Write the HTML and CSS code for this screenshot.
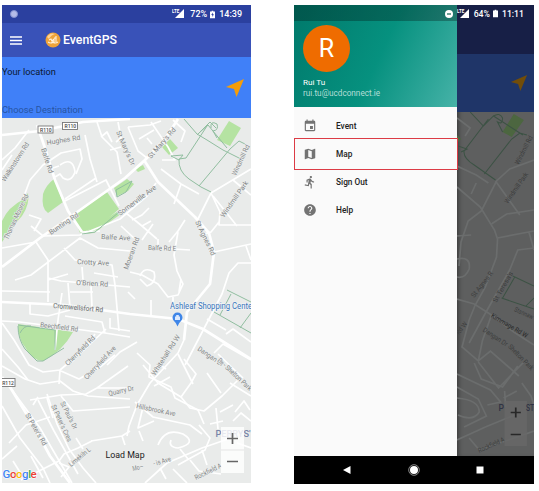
FILE: index.html
```html
<!DOCTYPE html>
<html lang="en">
<head>
<meta charset="utf-8">
<title>EventGPS</title>
<link rel="stylesheet" href="styles.css">
</head>
<body>
<main class="stage">
  <section class="phone phone-map">
    <header class="status">
      <span class="sync"></span>
      <svg class="signal" viewBox="0 0 13 10"><path d="M12 0V9H3Z"/><text x="0" y="4">LTE</text></svg>
      <span>72%</span>
      <svg class="battery" viewBox="0 0 6 9"><path d="M2 0h2v1h2v8H0V1h2Z"/><path class="bolt" d="M3.4 2 1.5 5h1.3v2.5L4.7 4.3H3.4Z"/></svg>
      <span>14:39</span>
    </header>
    <div class="toolbar">
      <svg class="menu" viewBox="0 0 12 9"><path d="M0 1h12M0 4.5h12M0 8h12"/></svg>
      <svg class="logo" viewBox="0 0 16 16"><circle cx="8" cy="8" r="7.5" fill="#eea33a"/><path d="M2 5Q5 0 10 2Q6 3 4 7Z" fill="#ffd394"/><path d="M3 10q3 2 5 0q2 2 5 0M4 8l2-1 1 2 2-2v3M11 4v6M9 6h2" fill="none" stroke="#fff3dd" stroke-width="1.1"/></svg>
      <h1>EventGPS</h1>
    </div>
    <div class="search">
      <div class="fields"><span class="from">Your location</span><span class="to">Choose Destination</span></div>
      <svg class="arrow" viewBox="0 0 20 20"><path d="M19 1 1 9l8 2 2.500 8Z"/></svg>
    </div>
    <div class="map">
      <svg class="canvas" viewBox="2 118 249 365">
        <g class="park">
          <path d="M54 179 63 202 48 213Q41 209 43 194Q46 185 54 179Z"/>
          <path d="M2 221Q8 207 24 199L28 193Q30 204 22 216L13 226 2 242Z"/>
          <path d="M73 215 107 192 119 209 99 226 80 233Z"/>
          <path d="M82 234 120 210 121 214 94 233Z"/>
          <path d="M114 188 127 179 134 184 128 191 117 196Z"/>
          <path d="M135 169 143 165 145 169 138 172Z"/>
          <path d="M162 147 170 139 178 148 169 155Z"/>
          <path d="M229 121 241 128 230 146 217 140Z"/>
          <path d="M18 324 73 332Q62 352 43 361Q31 360 25 347Q18 339 18 324Z"/>
        </g>
        <g class="road major">
          <path d="M2 135 40 131 83 122 130 119"/>
          <path d="M2 302 65 305 130 314 178 319 203 329 251 359"/>
          <path d="M2 267 40 238 73 215 125 178 145 160 165 139 178 119"/>
          <path d="M2 377 10 387 35 428 50 456 70 483"/>
          <path d="M37 125 45 148 55 180 68 211 82 232"/>
          <path d="M144 160 158 182 195 217 209 233 214 252 210 284 187 312 184 340"/>
        </g>
        <g class="road">
          <path d="M29 130 15 148 2 160M2 170 12 155"/>
          <path d="M24 196 30 180 43 165 61 153 80 149 82 159 76 174"/>
          <path d="M53 168 59 166M60 165Q73 156 75 172Q71 183 63 178L60 174 55 177"/>
          <path d="M85 135 90 159 97 182M97 122 102 137 117 152 121 174M101 137 107 132 112 142M118 122 121 138 116 142M110 150 121 147"/>
          <path d="M63 202 106 180 119 206M65 199 96 178M82 232 100 231"/>
          <path d="M29 215 41 219 34 231M31 226 43 236 80 235 120 219 147 196 156 183"/>
          <path d="M128 127 150 125 161 121M128 127 138 151 147 158M139 139 154 130M147 138 152 144M151 122 168 147 175 160 162 160M173 120 185 131 181 142"/>
          <path d="M161 169 181 184 199 194M181 184 174 204M185 220 178 231 169 242"/>
          <path d="M126 213 142 226 157 239M132 220 142 215 149 208M142 226 151 221M142 240 153 224M121 226 134 238"/>
          <path d="M251 169 211 193 198 219M211 193 220 212 219 225 251 225M233 180 251 195M213 196 237 226M219 222 211 232 201 235"/>
          <path d="M214 252 251 244M246 246 251 260M251 263 238 263 229 273 222 294 185 365"/>
          <path d="M2 248 36 242 48 260 48 302M15 280 31 275 80 238 98 248 130 251M64 248 75 260 112 265 115 285 119 331"/>
          <path d="M48 278 61 281 130 287M48 280 68 274M82 267 83 280M94 273 118 277M68 283 70 308M70 292 93 292M91 286 92 307"/>
          <path d="M2 291 50 292M30 304 30 314 48 316 70 310M2 321 20 322 75 329 105 333 130 337M62 293 58 320 55 350"/>
          <path d="M65 316 102 322 105 333M110 318 110 328 130 331"/>
          <path d="M178 232 174 255 177 271 183 284 178 295 168 297 158 284 142 275 130 272M140 276Q144 266 154 272Q157 283 147 286L140 279M173 297 173 307M181 279 179 292"/>
          <path d="M158 239 158 248 190 250M128 292 135 299M151 300 151 315"/>
          <path d="M184 340 178 353 150 383 137 405 129 426 127 436M207 319 226 330M251 342 233 329 226 334"/>
          <path d="M2 323 14 340 29 365 43 372 60 370 85 349 106 329"/>
          <path d="M2 366 25 379 40 384 60 381 73 391 88 396 130 399M2 349 18 367 28 380"/>
          <path d="M30 400 61 395 86 394 97 388 130 388M61 396 73 411 130 407M97 388 128 366"/>
          <path d="M61 371 79 379 100 367 115 355M60 370 59 384"/>
          <path d="M72 362 89 343 95 334M107 365 120 352 137 342"/>
          <path d="M137 353 150 365 149 377 171 387 175 398 198 410 204 424"/>
          <path d="M143 365 158 383 181 397M150 374 159 364 166 369M154 386 170 377M178 354 193 384"/>
          <path d="M184 359 196 374 191 383 181 397 190 408 204 411 222 396 239 379M207 373 221 393M218 354 243 378"/>
          <path d="M135 402 153 417 190 425 202 434M143 407 138 428 154 421"/>
          <path d="M158 445Q165 427 183 434Q198 443 178 448Q168 447 171 440M180 449 188 459M199 425 210 438 205 450 178 465"/>
          <path d="M210 424 223 421M216 408 218 429M220 412 233 405M235 412 244 401 250 410M251 421 241 413 233 421"/>
          <path d="M2 406 20 438 43 468 50 483M12 390 40 428 72 483M47 394 57 424 69 449 83 468 96 483M38 400 54 431 78 474"/>
          <path d="M9 443 26 425 50 417M2 459 17 446M21 480 59 461 64 454 78 448 92 441M59 463 69 467 61 477"/>
          <path d="M91 441 122 436 130 431M122 436 125 445M145 483 167 463 202 448 231 438"/>
          <path d="M173 469 187 483M190 460 199 471 221 474M202 450 207 465M160 468 166 479M237 443 251 448M230 383 251 396M214 353 223 344 251 360"/>
          <path d="M47 398 53 418M38 397 33 405M76 438 83 449M139 431 143 441M13 461 23 477M31 456 43 478"/>
        </g>
        <g class="track">
          <path d="M184 119 197 134 207 140 223 150 241 159M197 135 210 122 216 128M207 126 186 158 179 159Q178 171 189 179L201 187 211 192M199 186 230 149 239 141 245 144M199 133 208 125 227 148M211 128Q210 120 217 124Q219 130 213 131L217 138M171 156 183 155 179 160Z"/>
          <path d="M227 290 251 302M214 312 251 333M231 294 220 315M251 313 240 328"/>
          <path d="M18 325 55 330 55 350M20 333Q24 325 31 326M18 326Q18 339 25 349L37 361H43L64 348"/>
          <path d="M82 234 95 232 118 213M116 190 132 181 126 192 117 197Z"/>
        </g>
        <g class="label">
          <text transform="translate(47 145) rotate(-9)">Hughes Rd</text>
          <text transform="translate(41 149) rotate(72)">Balfe Rd</text>
          <text transform="translate(5 182) rotate(-57)" textLength="45" lengthAdjust="spacingAndGlyphs">Walkinstown Rd</text>
          <text transform="translate(8 240) rotate(-65)" textLength="49" lengthAdjust="spacingAndGlyphs">Thomas Moore Rd</text>
          <text transform="translate(51 235) rotate(-34)">Bunting Rd</text>
          <text transform="translate(101 239) rotate(3)">Balfe Ave</text>
          <text transform="translate(120 216) rotate(-37)">Somerville Ave</text>
          <text transform="translate(116 132) rotate(66)">St Mary's Dr</text>
          <text transform="translate(151 159) rotate(-49)">St Mary's Rd</text>
          <text transform="translate(236 176) rotate(-65)" textLength="33" lengthAdjust="spacingAndGlyphs">Windmill Rd</text>
          <text transform="translate(224 218) rotate(-55)">Windmill Park</text>
          <text transform="translate(195 222) rotate(64)">St Agnes Rd</text>
          <text transform="translate(77 264) rotate(3)">Crotty Ave</text>
          <text transform="translate(76 285) rotate(3)">O'Brien Rd</text>
          <text transform="translate(128 270) rotate(-70)">Moeran Rd</text>
          <text transform="translate(148 250) rotate(2)" textLength="28" lengthAdjust="spacingAndGlyphs">Balfe Rd E</text>
          <text class="strong" transform="translate(53 308) rotate(5)" textLength="50" lengthAdjust="spacingAndGlyphs">Cromwellsfort Rd</text>
          <text transform="translate(40 327) rotate(7)" textLength="38" lengthAdjust="spacingAndGlyphs">Beechfield Rd</text>
          <text transform="translate(68 366) rotate(-45)" textLength="39" lengthAdjust="spacingAndGlyphs">Cherryfield Rd</text>
          <text transform="translate(87 380) rotate(-47)" textLength="43" lengthAdjust="spacingAndGlyphs">Cherryfield Ave</text>
          <text transform="translate(155 376) rotate(-57)">Whitehall Rd W</text>
          <text transform="translate(197 350) rotate(34)" textLength="30" lengthAdjust="spacingAndGlyphs">Dangan Dr</text>
          <text transform="translate(217 361) rotate(43)" textLength="44" lengthAdjust="spacingAndGlyphs">Dr - Shelton Park</text>
          <text transform="translate(109 396) rotate(-13)" textLength="26" lengthAdjust="spacingAndGlyphs">Quarry Dr</text>
          <text transform="translate(136 408) rotate(12)" textLength="40" lengthAdjust="spacingAndGlyphs">Hillsbrook Ave</text>
          <text transform="translate(25 415) rotate(60)" textLength="36" lengthAdjust="spacingAndGlyphs">St Peter's Rd</text>
          <text transform="translate(51 406) rotate(65)" textLength="40" lengthAdjust="spacingAndGlyphs">St Peter's Cres</text>
          <text transform="translate(60 403) rotate(63)" textLength="30" lengthAdjust="spacingAndGlyphs">St Paul's Dr</text>
          <text transform="translate(71 467) rotate(-39)" textLength="26" lengthAdjust="spacingAndGlyphs">Limekiln L</text>
          <text transform="translate(154 466) rotate(-16)" textLength="18" lengthAdjust="spacingAndGlyphs">- is Ave</text>
          <text transform="translate(133 471) rotate(-12)" textLength="11" lengthAdjust="spacingAndGlyphs">Mo—</text>
          <text transform="translate(196 480) rotate(-26)" textLength="29" lengthAdjust="spacingAndGlyphs">Rockfield A</text>
        </g>
        <g class="shield">
          <rect x="38" y="126" width="15" height="7"/><text x="40" y="131.500">R110</text>
          <rect x="62.500" y="122.500" width="15" height="7"/><text x="64.500" y="128">R110</text>
          <rect x="0" y="378.500" width="15" height="8"/><text x="2.200" y="384.500">R112</text>
        </g>
        <text class="place" x="170" y="309" textLength="82" lengthAdjust="spacingAndGlyphs">Ashleaf Shopping Cente</text>
        <path class="pin" d="M177.500 326.500Q176 322.500 174 321A5 5 0 1 1 181 321Q179 322.500 177.500 326.500Z"/>
        <path d="M175 316.500h5v3.500h-5ZM176.200 316.500v-1.500h2.600v1.500" fill="#dceaff"/>
        <text class="district" x="215.500" y="437" textLength="35" lengthAdjust="spacingAndGlyphs">PERRYS'</text>
        <g class="zoom"><rect x="221" y="427" width="23" height="46"/><path d="M221 450h23" stroke="#e5e5e5"/><path class="sign" d="M227 438.500h11M232.500 433v11M227 461.500h11"/></g>
        <text class="google" x="2.500" y="477.500"><tspan fill="#4285f4">G</tspan><tspan fill="#ea4335">o</tspan><tspan fill="#fbbc05">o</tspan><tspan fill="#4285f4">g</tspan><tspan fill="#34a853">l</tspan><tspan fill="#ea4335">e</tspan></text>
        <text class="load" x="105.500" y="458">Load Map</text>
      </svg>
    </div>
  </section>

  <section class="phone phone-drawer">
    <div class="screen">
      <aside class="drawer">
        <header class="profile">
          <div class="avatar">R</div>
          <span class="name">Rui Tu</span>
          <span class="email">rui.tu@ucdconnect.ie</span>
        </header>
        <nav>
          <a class="item"><svg viewBox="0 0 24 24"><path d="M17 12h-5v5h5v-5zM16 1v2H8V1H6v2H5c-1.100 0-2 .9-2 2v14c0 1.100.9 2 2 2h14c1.100 0 2-.9 2-2V5c0-1.100-.9-2-2-2h-1V1h-2zm3 18H5V8h14v11z"/></svg>Event</a>
          <a class="item active"><svg viewBox="0 0 24 24"><path d="M20.500 3l-.2 0L15 5.100 9 3 3.400 4.900c-.2.100-.4.300-.4.500V20.500c0 .3.200.5.500.5l.2 0L9 18.900l6 2.100 5.600-1.900c.2-.1.400-.3.400-.5V3.500c0-.3-.2-.5-.5-.5zM15 19l-6-2.100V5l6 2.100V19z"/></svg>Map</a>
          <a class="item"><svg viewBox="0 0 24 24"><path d="M13.500 5.500c1.100 0 2-.9 2-2s-.9-2-2-2-2 .9-2 2 .9 2 2 2zM9.900 19.400l1-4.400 2.100 2v6h2v-7.500l-2.100-2 .6-3C14.800 12 16.800 13 19 13v-2c-1.900 0-3.500-1-4.300-2.400l-1-1.600c-.4-.6-1-1-1.700-1-.3 0-.5.100-.8.100L6 8.300V13h2V9.600l1.800-.7-1.600 8.100-4.900-1-.4 2 7 1.400z"/></svg>Sign Out</a>
          <a class="item"><svg viewBox="0 0 24 24"><path d="M12 2C6.500 2 2 6.500 2 12s4.500 10 10 10 10-4.500 10-10S17.500 2 12 2zm1 17h-2v-2h2v2zm2.100-7.700l-.9.900C13.400 12.900 13 13.500 13 15h-2v-.5c0-1.100.4-2.100 1.200-2.800l1.200-1.300c.4-.3.600-.8.600-1.400 0-1.100-.9-2-2-2s-2 .9-2 2H8c0-2.200 1.800-4 4-4s4 1.800 4 4c0 .9-.4 1.700-.9 2.300z"/></svg>Help</a>
        </nav>
      </aside>
      <div class="dimmed">
        <div class="dim-bar"></div>
        <div class="dim-search"><svg class="arrow" viewBox="0 0 20 20"><path d="M19 1 1 9l8 2 2.500 8Z"/></svg></div>
        <svg class="dim-map" viewBox="458 112 76 344" preserveAspectRatio="none">
          <path class="dim-park" d="M514 114 524 120 512 137 503 132ZM458 135 462 139 458 143Z"/>
          <g class="dim-road">
            <path d="M458 118 471 128 466 136M458 166 477 175 489 183M534 160 510 169 497 181 482 211 469 221 462 242 460 266M458 187 481 207 495 230 498 239 497 257 486 287 476 305 470 320"/>
            <path d="M477 183 472 194M496 181 520 215M492 224 507 214 534 210M498 238 534 231M529 232 534 250M534 248 518 250 510 270 485 315 470 343M458 236 472 235M458 259Q472 256 470 269Q466 279 458 277"/>
            <path d="M458 299 475 304 492 315 514 332 534 345M470 320 463 347 479 361 491 351 519 376M492 315 483 341 479 361M475 363 482 379 503 387 518 366M479 362 499 388 524 362M458 374 491 390 501 402 488 405M458 387 479 399 487 416 465 427"/>
            <path d="M505 391 506 407M504 398 517 391M522 383 531 396 534 405M458 398Q480 400 480 412Q474 422 459 415M458 440 486 427 515 415M470 438 480 450 534 431"/>
          </g>
          <path class="dim-track" d="M471 112 484 126 494 116 523 135M489 119 465 151Q464 158 475 165L496 180M485 174 512 139 520 133 527 135M494 116Q500 112 503 118Q503 125 498 122L503 132M459 146 468 149 462 152M513 276 534 286M502 298 534 309M515 277 503 298M534 298 526 306"/>
          <g class="dim-label">
            <text transform="translate(519 165) rotate(-63)" textLength="31" lengthAdjust="spacingAndGlyphs">Windmill Rd</text><text transform="translate(508 204) rotate(-55)" textLength="36" lengthAdjust="spacingAndGlyphs">Windmill Park</text>
            <text transform="translate(475 298) rotate(-52)" textLength="31" lengthAdjust="spacingAndGlyphs">St Agnes R</text><text transform="translate(497 303) rotate(-61)" textLength="34" lengthAdjust="spacingAndGlyphs">St Teresa's</text>
            <text class="bold" transform="translate(491 317) rotate(31)" textLength="41" lengthAdjust="spacingAndGlyphs">Kimmage Rd W</text><text transform="translate(483 331) rotate(34)" textLength="28" lengthAdjust="spacingAndGlyphs">Dangan Dr</text>
            <text transform="translate(508 347) rotate(46)" textLength="33" lengthAdjust="spacingAndGlyphs">Shelton Park</text><text transform="translate(460 335) rotate(-52)" textLength="14" lengthAdjust="spacingAndGlyphs">Rd W</text><text transform="translate(480 453) rotate(-25)" textLength="28" lengthAdjust="spacingAndGlyphs">Rockfield A</text>
            <text transform="translate(514 311) rotate(25)" textLength="20" lengthAdjust="spacingAndGlyphs">Stannaw</text>
          </g>
          <rect class="dim-zoom" x="505" y="401" width="22" height="45"/>
          <text class="dim-district" x="499" y="411">P</text><text class="dim-district" x="526" y="411" textLength="8" lengthAdjust="spacingAndGlyphs">ST</text>
          <path class="dim-sign" d="M511 412.500h10M516 407.500v10M511 434.500h10"/>
        </svg>
      </div>
      <div class="statusbar">
        <svg class="dnd" viewBox="0 0 8 8"><circle cx="4" cy="4" r="4"/><path d="M2 4h4"/></svg>
        <svg class="signal" viewBox="0 0 13 10"><path d="M12 0V9H3Z"/><text x="0" y="4">LTE</text></svg>
        <span>64%</span>
        <svg class="battery" viewBox="0 0 6 9"><path d="M2 0h2v1h2v8H0V1h2Z"/></svg>
        <span>11:11</span>
      </div>
    </div>
    <footer class="navbar">
      <svg viewBox="0 0 12 12"><path d="M9.500 2v8L2 6Z"/></svg>
      <svg viewBox="0 0 12 12"><circle cx="6" cy="6" r="5.300" class="ring"/><circle cx="6" cy="6" r="4"/></svg>
      <svg viewBox="0 0 12 12"><path d="M2.500 2.500h7v7h-7Z"/></svg>
    </footer>
  </section>
</main>
</body>
</html>
```
FILE: styles.css
```css
* { box-sizing: border-box; }
body { margin: 0; background: #fff; font-family: Roboto, "Liberation Sans", sans-serif; }
svg { display: block; flex: none; }
.stage { width: 539px; height: 491px; padding: 5px 5px 0 2px; display: flex; justify-content: space-between; overflow: hidden; }
.phone { display: flex; flex-direction: column; overflow: hidden; }
.phone-map { width: 249px; height: 478px; }
.phone-drawer { width: 240px; height: 479px; }

.status { height: 18px; flex: none; background: #2b409f; display: flex; align-items: center; justify-content: flex-end; padding-right: 9px; color: #fff; font-size: 9px; font-weight: 500; }
.sync { width: 8px; height: 8px; border-radius: 50%; background: #b4bce8; border: 1px solid #8390d0; margin-left: 8px; margin-right: auto; }
.signal { width: 13px; height: 10px; fill: #fff; margin-right: 5px; }
.signal text { font-size: 4.5px; font-weight: 700; }
.battery { width: 5px; height: 9px; fill: #fff; margin: 0 4px 0 3px; }
.bolt { fill: #2b409f; }
.toolbar { height: 34px; flex: none; background: #3952b8; display: flex; align-items: center; padding-left: 8px; }
.menu { width: 12px; height: 9px; stroke: #fff; stroke-width: 1.5; }
.logo { width: 16px; height: 16px; margin-left: 23px; }
h1 { margin: 0 0 0 2px; color: #fff; font-size: 12.3px; font-weight: 500; line-height: 16px; }
.search { height: 61px; flex: none; background: #4080f8; display: flex; justify-content: space-between; }
.fields { display: flex; flex-direction: column; font-size: 9.2px; line-height: 12px; padding-top: 9px; gap: 26px; }
.from { color: #0b1830; }
.to { color: #2855a3; font-size: 9.3px; }
.arrow { width: 20px; height: 20px; fill: #f59d0a; margin: 21px 6px 0 0; }
.map { flex: 1; background: #e9ebea; }
.canvas { width: 249px; height: 365px; }
.park { fill: #b5e3a2; }
.road { fill: none; stroke: #fff; stroke-width: 1.7; stroke-linejoin: round; }
.major { stroke-width: 2.7; }
.track { fill: none; stroke: #91bea0; stroke-width: 1; }
.label { font-size: 7px; fill: #828586; stroke: #eef0ef; stroke-width: 1.2px; paint-order: stroke; }
.label .strong { fill: #686b6c; font-size: 7.2px; }
.shield rect { fill: #fff; stroke: #777; stroke-width: .9; }
.shield text { font-size: 5px; font-weight: 500; fill: #444; }
.place { font-size: 8.6px; fill: #3974bb; stroke: #f1f4f5; stroke-width: 1.5px; paint-order: stroke; }
.pin { fill: #3f86e8; }
.district { font-size: 8.5px; font-weight: 500; fill: #7885a8; }
.zoom rect { fill: #fff; fill-opacity: .82; }
.sign { stroke: #666; stroke-width: 1.7; }
.google { font-size: 11.5px; font-weight: 500; letter-spacing: -.45px; stroke: #fff; stroke-width: 1px; paint-order: stroke; }
.load { font-size: 8.8px; fill: #202020; }

.screen { height: 451px; flex: none; position: relative; display: flex; }
.drawer { width: 163px; background: #fafafa; flex: none; }
.profile { height: 102px; padding: 20px 0 0 9px; display: flex; flex-direction: column; background: linear-gradient(115deg, #00796b 0%, #06917f 52%, #4db6ac 105%); color: #fff; }
.avatar { width: 47px; height: 47px; flex: none; border-radius: 50%; background: #ef6c00; font-size: 25px; line-height: 48px; text-align: center; }
.name { font-size: 8.1px; line-height: 10px; margin-top: 5px; }
.email { font-size: 8.2px; line-height: 10px; margin-top: 1px; color: #b4ded7; }
nav { padding-top: 5px; }
.item { height: 28px; display: flex; align-items: center; padding-left: 9px; color: #222; font-size: 8.3px; font-weight: 500; }
.item svg { width: 14px; height: 14px; fill: #737373; margin-right: 19px; }
.active { height: 32px; margin: -2px 0; outline: 1px solid #dc3b45; outline-offset: -1px; width: 164px; position: relative; }
.dimmed { width: 77px; background: #5e5f5f; box-shadow: inset 4px 0 5px -3px #333; }
.dim-bar { height: 49px; background: #171f46; }
.dim-search { height: 58px; background: #1f3568; display: flex; justify-content: flex-end; }
.dim-search .arrow { width: 18px; height: 18px; fill: #724d09; margin: 20px 6px 0 0; }
.dim-map { width: 77px; height: 344px; }
.dim-park { fill: #4c6640; }
.dim-road { fill: none; stroke: #6b6d6d; stroke-width: 1.7; }
.dim-track { fill: none; stroke: #3c5244; stroke-width: 1; }
.dim-label { font-size: 6.8px; fill: #3c3d3d; }
.bold { fill: #292a2a; }
.dim-zoom { fill: #686868; fill-opacity: .8; }
.dim-district { font-size: 8.5px; font-weight: 500; fill: #303344; }
.dim-sign { stroke: #282828; stroke-width: 1.7; }
.statusbar { position: absolute; top: 0; left: 0; right: 0; height: 16px; padding: 1px 10px 0 0; display: flex; align-items: center; justify-content: flex-end; background: linear-gradient(90deg, rgba(0,0,0,.28) 163px, transparent 163px); color: #fff; font-size: 8.7px; font-weight: 500; }
.statusbar .signal { margin-right: 4px; }
.dnd { width: 8px; height: 8px; fill: #fff; margin-right: 4px; }
.dnd path { stroke: #136554; stroke-width: 1.2; }
.navbar { height: 28px; flex: none; background: #000; display: flex; align-items: center; justify-content: space-between; padding: 0 48px 0 47px; }
.navbar svg { width: 12px; height: 12px; fill: #fff; }
.navbar .ring { fill: none; stroke: #aaa; stroke-width: .8; }
```
